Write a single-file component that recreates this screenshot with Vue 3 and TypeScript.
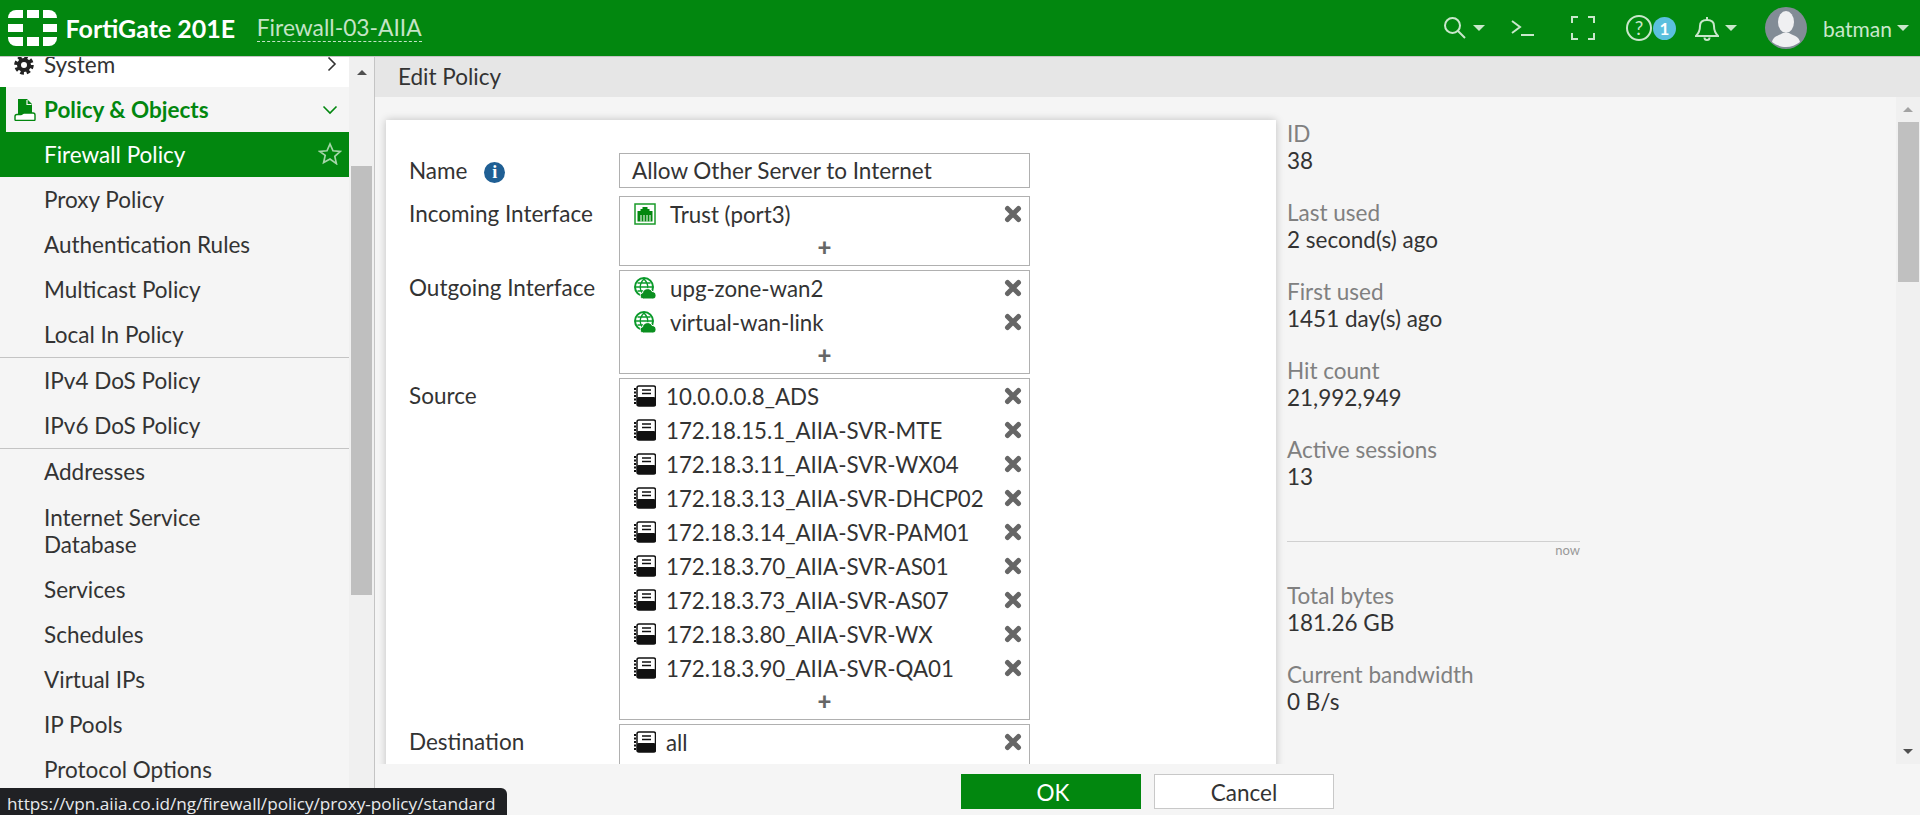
<script setup lang="ts">
interface NavItem {
  label: string;
  divider?: boolean;
  tall?: boolean;
}

const navItems: NavItem[] = [
  { label: 'Proxy Policy' },
  { label: 'Authentication Rules' },
  { label: 'Multicast Policy' },
  { label: 'Local In Policy' },
  { label: 'IPv4 DoS Policy', divider: true },
  { label: 'IPv6 DoS Policy' },
  { label: 'Addresses', divider: true },
  { label: 'Internet Service Database', tall: true },
  { label: 'Services' },
  { label: 'Schedules' },
  { label: 'Virtual IPs' },
  { label: 'IP Pools' },
  { label: 'Protocol Options' }
];

const sources: string[] = [
  '10.0.0.0.8_ADS',
  '172.18.15.1_AIIA-SVR-MTE',
  '172.18.3.11_AIIA-SVR-WX04',
  '172.18.3.13_AIIA-SVR-DHCP02',
  '172.18.3.14_AIIA-SVR-PAM01',
  '172.18.3.70_AIIA-SVR-AS01',
  '172.18.3.73_AIIA-SVR-AS07',
  '172.18.3.80_AIIA-SVR-WX',
  '172.18.3.90_AIIA-SVR-QA01'
];

const outgoing: string[] = ['upg-zone-wan2', 'virtual-wan-link'];

const statsTop = [
  { label: 'ID', value: '38' },
  { label: 'Last used', value: '2 second(s) ago' },
  { label: 'First used', value: '1451 day(s) ago' },
  { label: 'Hit count', value: '21,992,949' },
  { label: 'Active sessions', value: '13' }
];

const statsBottom = [
  { label: 'Total bytes', value: '181.26 GB' },
  { label: 'Current bandwidth', value: '0 B/s' }
];
</script>

<template>
  <div class="app">
    <header class="topbar">
      <svg class="logo" width="50" height="36" viewBox="0 0 50 36">
        <defs>
          <clipPath id="logo-clip"><rect x="0" y="0" width="49" height="36" rx="8" /></clipPath>
        </defs>
        <g fill="#fff" clip-path="url(#logo-clip)">
          <rect x="0" y="0" width="15" height="8" />
          <rect x="19" y="0" width="12" height="8" />
          <rect x="35" y="0" width="14" height="8" />
          <rect x="0" y="14" width="15" height="8" />
          <rect x="35" y="14" width="14" height="8" />
          <rect x="0" y="27" width="15" height="9" />
          <rect x="19" y="27" width="12" height="9" />
          <rect x="35" y="27" width="14" height="9" />
        </g>
      </svg>
      <span class="product">FortiGate 201E</span>
      <span class="hostname">Firewall-03-AIIA</span>
      <div class="tools">
        <svg class="tool-search" width="24" height="24" viewBox="0 0 24 24" fill="none" stroke="currentColor" stroke-width="2">
          <circle cx="9.500" cy="9.500" r="7.500" />
          <path d="M15 15l7 7" />
        </svg>
        <i class="caret caret-search"></i>
        <svg class="tool-term" width="24" height="20" viewBox="0 0 24 20" fill="none" stroke="currentColor" stroke-width="2">
          <path d="M1 3l8 6-8 6" />
          <path d="M10 17h13" />
        </svg>
        <svg class="tool-full" width="24" height="24" viewBox="0 0 24 24" fill="none" stroke="currentColor" stroke-width="2">
          <path d="M1 7V1h6M17 1h6v6M23 17v6h-6M7 23H1v-6" />
        </svg>
        <span class="tool-help">?</span>
        <span class="badge">1</span>
        <svg class="tool-bell" width="24" height="25" viewBox="0 0 24 25" fill="none" stroke="currentColor" stroke-width="2">
          <path d="M1 20c3-3 4-5 4-10 0-4 3-6 7-6s7 2 7 6c0 5 1 7 4 10z" />
          <path d="M12 1v3" />
          <path d="M9.500 21.500a2.500 2.500 0 0 0 5 0" />
        </svg>
        <i class="caret caret-bell"></i>
        <svg class="avatar" width="42" height="42" viewBox="0 0 42 42">
          <circle cx="21" cy="21" r="21" fill="#828c96" />
          <ellipse cx="21" cy="15" rx="8" ry="11" fill="#eff0f2" />
          <path d="M7 35c1-6 8-7 11-9h6c3 2 10 3 11 9-4 3-9 5-14 5s-10-2-14-5z" fill="#eff0f2" />
        </svg>
        <span class="username">batman</span>
        <i class="caret caret-user"></i>
      </div>
    </header>

    <div class="layout">
      <aside class="sidebar">
        <nav class="nav">
          <div class="nav-row nav-system">
            <svg class="nav-icon" width="20" height="20" viewBox="0 0 20 20" fill="none" stroke="#222">
              <circle cx="10" cy="10" r="5" stroke-width="4" />
              <circle cx="10" cy="10" r="8" stroke-width="3.500" stroke-dasharray="3.600 2.680" />
            </svg>
            <span>System</span>
            <svg class="chevron" width="10" height="16" viewBox="0 0 10 16" fill="none" stroke="#333" stroke-width="1.600">
              <path d="M1.500 1.500L8 8l-6.500 6.500" />
            </svg>
          </div>
          <div class="nav-row nav-group">
            <svg class="nav-icon" width="22" height="22" viewBox="0 0 22 22">
              <path d="M4 0h9l5 5v10H4z" fill="#02870f" />
              <path d="M13 1v4.500h4.500" fill="none" stroke="#f5f5f5" stroke-width="1.200" />
              <path d="M1 20.500v-3c0-1 1-2 2-2h4c1 0 1.500-1.500 3-1.500h9c1 0 2 1 2 2v4.500c0 .5-.5 1-1 1H2c-.5 0-1-.5-1-1z" fill="#fff" stroke="#02870f" stroke-width="1.400" />
            </svg>
            <span>Policy &amp; Objects</span>
            <svg class="chevron chevron-down" width="16" height="10" viewBox="0 0 16 10" fill="none" stroke="#02870f" stroke-width="1.600">
              <path d="M1.500 1.500L8 8l6.500-6.500" />
            </svg>
          </div>
          <div class="nav-row nav-active">
            <span>Firewall Policy</span>
            <svg class="star" width="24" height="23" viewBox="0 0 24 23" fill="none" stroke="#a5d6a9" stroke-width="1.700">
              <path d="M12 2l3 6.800 7.300.7-5.500 4.900 1.600 7.200L12 17l-6.400 3.600 1.600-7.200L1.700 9.500 9 8.800z" />
            </svg>
          </div>
          <div
            v-for="item in navItems"
            :key="item.label"
            :class="['nav-row', { 'has-divider': item.divider, 'is-tall': item.tall }]"
          >
            <span class="nav-label">{{ item.label }}</span>
          </div>
        </nav>
        <div class="side-track">
          <i class="arrow-up side-arrow"></i>
          <div class="side-thumb"></div>
        </div>
      </aside>

      <main class="main">
        <div class="title-bar">Edit Policy</div>
        <div class="content">
          <section class="card">
            <div class="form-row name-row">
              <label class="form-label">Name <span class="info">i</span></label>
              <div class="text-input">Allow Other Server to Internet</div>
            </div>
            <div class="form-row">
              <label class="form-label">Incoming Interface</label>
              <div class="select-box">
                <div class="entry">
                  <svg class="entry-icon" width="22" height="22" viewBox="0 0 22 22">
                    <rect x="1" y="1" width="20" height="20" fill="#fff" stroke="#1a9a2a" stroke-width="1.500" />
                    <path d="M3.500 8h3V6h2V4h5v2h2v2h3v10.500h-15z" fill="#02870f" />
                    <path d="M7 12v6.500M10 12v6.500M13 12v6.500M16 12v6.500" stroke="#fff" />
                  </svg>
                  <span class="entry-text iface">Trust (port3)</span>
                  <svg class="remove" width="18" height="18" viewBox="0 0 18 18"><path d="M3.500 3.500l11 11M14.500 3.500l-11 11" stroke="#666" stroke-width="5" stroke-linecap="round" /></svg>
                </div>
                <div class="add">+</div>
              </div>
            </div>
            <div class="form-row">
              <label class="form-label">Outgoing Interface</label>
              <div class="select-box">
                <div v-for="name in outgoing" :key="name" class="entry">
                  <svg class="entry-icon" width="22" height="22" viewBox="0 0 22 22">
                    <circle cx="10" cy="10" r="9" fill="#fff" stroke="#0a9a2a" stroke-width="2" />
                    <path d="M2 10h16M10 2c-5 5-5 11 0 16M10 2c5 5 5 11 0 16M3.500 6h13M3.500 14h13" fill="none" stroke="#0a9a2a" stroke-width="1.300" />
                    <path d="M9.500 22c-4 0-4.500-5.500-1-6 .5-5 8-6 9.500-1.500 5 0 5.500 7.500.5 7.500z" fill="#0a8f1f" stroke="#fff" />
                  </svg>
                  <span class="entry-text iface">{{ name }}</span>
                  <svg class="remove" width="18" height="18" viewBox="0 0 18 18"><path d="M3.500 3.500l11 11M14.500 3.500l-11 11" stroke="#666" stroke-width="5" stroke-linecap="round" /></svg>
                </div>
                <div class="add">+</div>
              </div>
            </div>
            <div class="form-row">
              <label class="form-label">Source</label>
              <div class="select-box">
                <div v-for="name in sources" :key="name" class="entry">
                  <svg class="entry-icon" width="22" height="22" viewBox="0 0 22 22">
                    <rect x="3" y="1" width="18.500" height="20" rx="2" fill="#fff" stroke="#111" stroke-width="1.500" />
                    <rect x="3" y="12" width="18.500" height="9" rx="1.500" fill="#111" />
                    <path d="M8 5h9M8 8.500h9" stroke="#111" stroke-width="1.500" />
                    <path d="M1 3v16" stroke="#111" stroke-width="2" stroke-dasharray="2 1.500" />
                  </svg>
                  <span class="entry-text">{{ name }}</span>
                  <svg class="remove" width="18" height="18" viewBox="0 0 18 18"><path d="M3.500 3.500l11 11M14.500 3.500l-11 11" stroke="#666" stroke-width="5" stroke-linecap="round" /></svg>
                </div>
                <div class="add">+</div>
              </div>
            </div>
            <div class="form-row">
              <label class="form-label">Destination</label>
              <div class="select-box clipped-box">
                <div class="entry">
                  <svg class="entry-icon" width="22" height="22" viewBox="0 0 22 22">
                    <rect x="3" y="1" width="18.500" height="20" rx="2" fill="#fff" stroke="#111" stroke-width="1.500" />
                    <rect x="3" y="12" width="18.500" height="9" rx="1.500" fill="#111" />
                    <path d="M8 5h9M8 8.500h9" stroke="#111" stroke-width="1.500" />
                    <path d="M1 3v16" stroke="#111" stroke-width="2" stroke-dasharray="2 1.500" />
                  </svg>
                  <span class="entry-text">all</span>
                  <svg class="remove" width="18" height="18" viewBox="0 0 18 18"><path d="M3.500 3.500l11 11M14.500 3.500l-11 11" stroke="#666" stroke-width="5" stroke-linecap="round" /></svg>
                </div>
              </div>
            </div>
          </section>

          <section class="details">
            <div v-for="stat in statsTop" :key="stat.label" class="stat">
              <div class="stat-label">{{ stat.label }}</div>
              <div class="stat-value">{{ stat.value }}</div>
            </div>
            <div class="chart">
              <div class="chart-now">now</div>
            </div>
            <div v-for="stat in statsBottom" :key="stat.label" class="stat">
              <div class="stat-label">{{ stat.label }}</div>
              <div class="stat-value">{{ stat.value }}</div>
            </div>
          </section>

          <div class="main-track">
            <i class="arrow-up main-arrow"></i>
            <div class="main-thumb"></div>
            <i class="arrow-down"></i>
          </div>
        </div>
        <footer class="footer">
          <button class="btn btn-ok">OK</button>
          <button class="btn btn-cancel">Cancel</button>
        </footer>
      </main>
    </div>

    <div class="status-tip">https://vpn.aiia.co.id/ng/firewall/policy/proxy-policy/standard</div>
  </div>
</template>

<style>
html,
body {
  margin: 0;
  overflow: hidden;
}
</style>

<style scoped>
.app {
  position: relative;
  height: 815px;
  display: flex;
  flex-direction: column;
  overflow: hidden;
  font-family: Lato, "Liberation Sans", sans-serif;
  font-size: 22.5px;
  color: #333;
  background: #f5f5f5;
}

.topbar {
  flex: none;
  height: 56px;
  display: flex;
  align-items: center;
  background: #02870f;
  border-bottom: 1px solid #c4c4c4;
}
.logo {
  margin-left: 8px;
}
.product {
  margin-left: 7.5px;
  font-size: 25px;
  font-weight: 700;
  color: #fff;
}
.hostname {
  margin-left: 21.5px;
  font-size: 22.8px;
  line-height: 27px;
  color: #c4e4c6;
  border-bottom: 1px dashed #c4e4c6;
}
.tools {
  margin-left: auto;
  display: flex;
  align-items: center;
  color: #c9e7cb;
}
.caret {
  width: 0;
  height: 0;
  border-left: 6px solid transparent;
  border-right: 6px solid transparent;
  border-top: 6px solid #c9e7cb;
}
.caret-search {
  margin-left: 6px;
}
.tool-term {
  margin-left: 26px;
}
.tool-full {
  margin-left: 36px;
}
.tool-help {
  margin-left: 31px;
  width: 22px;
  height: 22px;
  border: 2px solid #c9e7cb;
  border-radius: 50%;
  font-size: 19px;
  line-height: 22px;
  text-align: center;
}
.badge {
  margin-left: 1px;
  width: 23px;
  height: 23px;
  border-radius: 50%;
  background: #5bc0de;
  color: #fff;
  font-size: 17px;
  font-weight: 700;
  line-height: 23px;
  text-align: center;
}
.tool-bell {
  margin-left: 19px;
}
.caret-bell {
  margin-left: 6px;
}
.avatar {
  margin-left: 28px;
}
.username {
  margin-left: 16px;
  font-size: 21px;
}
.caret-user {
  margin-left: 5px;
  margin-right: 11px;
}

.layout {
  flex: 1;
  min-height: 0;
  display: flex;
}

.sidebar {
  flex: none;
  width: 375px;
  display: flex;
  border-right: 1px solid #c4c4c4;
  box-sizing: border-box;
}
.nav {
  width: 349px;
  overflow: hidden;
  background: #f5f5f5;
}
.nav-row {
  position: relative;
  height: 45px;
  display: flex;
  align-items: center;
  padding-left: 44px;
  box-sizing: border-box;
}
.nav-row.is-tall {
  height: 73px;
  line-height: 27px;
  padding-right: 120px;
}
.nav-row.has-divider {
  height: 46px;
  border-top: 1px solid #c4c4c4;
}
.nav-system {
  margin-top: -15px;
  background: #fff;
}
.nav-group {
  color: #02870f;
  font-weight: 700;
  border-left: 6px solid #02870f;
  padding-left: 38px;
}
.nav-active {
  background: #02870f;
  color: #fff;
}
.nav-icon {
  position: absolute;
  left: 14px;
  top: 50%;
  transform: translateY(-50%);
}
.nav-group .nav-icon {
  left: 8px;
}
.chevron {
  position: absolute;
  right: 12px;
  top: 14px;
}
.chevron-down {
  right: 11px;
  top: 18px;
}
.star {
  position: absolute;
  right: 7px;
  top: 10px;
}

.side-track {
  width: 25px;
  background: #f0f0f0;
  display: flex;
  flex-direction: column;
  align-items: center;
}
.arrow-up {
  width: 0;
  height: 0;
  border-left: 5px solid transparent;
  border-right: 5px solid transparent;
  border-bottom: 5px solid #505050;
}
.side-arrow {
  margin-top: 13px;
}
.side-thumb {
  margin-top: 91px;
  width: 21px;
  height: 429px;
  background: #bfbfbf;
}

.main {
  flex: 1;
  min-width: 0;
  display: flex;
  flex-direction: column;
}
.title-bar {
  flex: none;
  height: 40px;
  line-height: 40px;
  padding-left: 23px;
  background: #e6e6e6;
}
.content {
  flex: 1;
  min-height: 0;
  display: flex;
  overflow: hidden;
}
.card {
  flex: none;
  width: 890px;
  height: 900px;
  margin: 23px 0 0 11px;
  padding: 33px 0 0 23px;
  box-sizing: border-box;
  background: #fff;
  box-shadow: 0 0 8px rgba(0, 0, 0, 0.22);
}
.form-row {
  display: flex;
  align-items: flex-start;
  margin-bottom: 4px;
}
.name-row {
  margin-bottom: 7px;
}
.form-label {
  flex: none;
  width: 210px;
  line-height: 36px;
}
.info {
  display: inline-block;
  width: 21px;
  height: 21px;
  margin-left: 11px;
  border-radius: 50%;
  background: #1f5f94;
  color: #fff;
  font-family: "Liberation Serif", serif;
  font-size: 18px;
  font-weight: 700;
  line-height: 21px;
  text-align: center;
  vertical-align: 1px;
}
.text-input {
  width: 411px;
  height: 35px;
  box-sizing: border-box;
  padding-left: 12px;
  border: 1px solid #b0b0b0;
  line-height: 33px;
}
.select-box {
  width: 411px;
  box-sizing: border-box;
  border: 1px solid #b0b0b0;
}
.clipped-box {
  padding-bottom: 34px;
}
.entry {
  height: 34px;
  display: flex;
  align-items: center;
  padding-left: 14px;
  padding-right: 7px;
}
.entry-icon {
  flex: none;
}
.entry-text {
  margin-left: 10px;
  font-size: 22.3px;
}
.entry-text.iface {
  margin-left: 14px;
}
.remove {
  margin-left: auto;
}
.add {
  height: 34px;
  line-height: 32px;
  text-align: center;
  color: #666;
  font-weight: 900;
  font-size: 24px;
}

.details {
  flex: none;
  width: 293px;
  margin-left: 11px;
  padding-top: 23px;
}
.stat {
  margin-bottom: 25px;
  line-height: 27px;
}
.stat-label {
  color: #808080;
}
.chart {
  height: 41px;
  margin-top: 51px;
  margin-bottom: 0;
  border-top: 1px solid #d0d0d0;
  box-sizing: border-box;
}
.chart-now {
  text-align: right;
  font-size: 13px;
  line-height: 17px;
  color: #999;
}

.main-track {
  flex: none;
  width: 24px;
  margin-left: auto;
  background: #f0f0f0;
  display: flex;
  flex-direction: column;
  align-items: center;
}
.main-arrow {
  margin-top: 10px;
  border-bottom-color: #a3a3a3;
}
.main-thumb {
  margin-top: 10px;
  width: 21px;
  height: 160px;
  background: #c0c0c0;
}
.arrow-down {
  margin-top: auto;
  margin-bottom: 10px;
  width: 0;
  height: 0;
  border-left: 5px solid transparent;
  border-right: 5px solid transparent;
  border-top: 5px solid #505050;
}

.footer {
  flex: none;
  height: 51px;
  display: flex;
  gap: 13px;
  padding: 10px 0 0 586px;
  box-sizing: border-box;
}
.btn {
  width: 180px;
  height: 35px;
  padding: 2px 0 0;
  font-family: inherit;
  font-size: 22.5px;
  box-sizing: border-box;
}
.btn-ok {
  padding-left: 4px;
  background: #02870f;
  border: none;
  color: #fff;
}
.btn-cancel {
  background: #fff;
  border: 1px solid #c8c8c8;
  color: #333;
}

.status-tip {
  position: absolute;
  left: 0;
  bottom: 0;
  width: 507px;
  height: 27px;
  box-sizing: border-box;
  padding-left: 7px;
  background: #202124;
  border-top-right-radius: 6px;
  color: #e8eaed;
  font-family: "Open Sans", sans-serif;
  font-size: 17.2px;
  line-height: 31px;
  white-space: nowrap;
}
</style>
